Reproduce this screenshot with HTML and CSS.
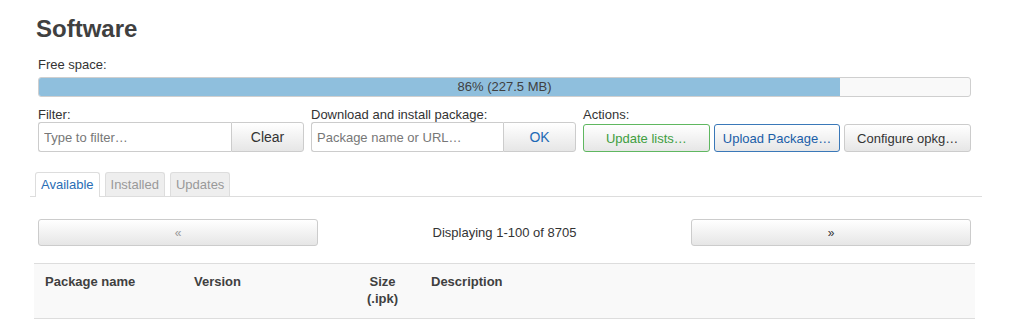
FILE: index.html
```html
<!DOCTYPE html>
<html lang="en">
<head>
  <meta charset="UTF-8">
  <title>Software</title>
  <link rel="stylesheet" href="styles.css">
</head>
<body>

<div class="main">
  <h2 class="title">Software</h2>

  <div class="label">Free space:</div>
  <div class="progress">
    <div class="progress-fill" style="width: 86%"></div>
    <div class="progress-text">86% (227.5 MB)</div>
  </div>

  <div class="controls">
    <div class="control">
      <div class="label">Filter:</div>
      <div class="input-group">
        <input type="text" placeholder="Type to filter…">
        <button class="btn">Clear</button>
      </div>
    </div>
    <div class="control">
      <div class="label">Download and install package:</div>
      <div class="input-group">
        <input type="text" placeholder="Package name or URL…">
        <button class="btn btn-ok">OK</button>
      </div>
    </div>
    <div class="control">
      <div class="label">Actions:</div>
      <div class="actions">
        <button class="btn btn-action btn-green">Update lists…</button>
        <button class="btn btn-action btn-blue">Upload Package…</button>
        <button class="btn btn-action">Configure opkg…</button>
      </div>
    </div>
  </div>

  <ul class="tabs">
    <li class="tab active">Available</li>
    <li class="tab">Installed</li>
    <li class="tab">Updates</li>
  </ul>

  <div class="pager">
    <button class="btn btn-page disabled">&laquo;</button>
    <div class="pager-text">Displaying 1-100 of 8705</div>
    <button class="btn btn-page">&raquo;</button>
  </div>

  <table class="packages">
    <thead>
      <tr>
        <th class="col-name">Package name</th>
        <th class="col-version">Version</th>
        <th class="col-size">Size<br>(.ipk)</th>
        <th>Description</th>
      </tr>
    </thead>
  </table>
</div>

</body>
</html>
```

FILE: styles.css
```css
body {
  margin: 0;
  padding: 0;
  background: #ffffff;
  font-family: "Liberation Sans", Arial, sans-serif;
  font-size: 13px;
  color: #404040;
}

.main {
  width: 933px;
  padding: 15px 0 0 38px;
}

.title {
  margin: 0 0 14px -2px;
  font-size: 24px;
  line-height: 28px;
  font-weight: bold;
  color: #404040;
}

.label {
  line-height: 15px;
  color: #333;
}

/* Free space bar */
.progress {
  position: relative;
  height: 20px;
  margin-top: 5px;
  box-sizing: border-box;
  border: 1px solid #cfcfcf;
  border-radius: 3px;
  background: #f9f9f9;
  overflow: hidden;
}

.progress-fill {
  height: 100%;
  background: #8fbfdd;
}

.progress-text {
  position: absolute;
  top: 0;
  left: 0;
  right: 0;
  text-align: center;
  line-height: 18px;
  color: #404040;
}

/* Filter / download / actions */
.controls {
  display: grid;
  grid-template-columns: 266px 265px 388px;
  gap: 7px;
  margin-top: 10px;
}

.input-group {
  display: flex;
  height: 30px;
}

.input-group input {
  flex: 1;
  min-width: 0;
  box-sizing: border-box;
  height: 30px;
  margin: 0;
  padding: 0 5px;
  border: 1px solid #ccc;
  border-right: none;
  border-radius: 3px 0 0 3px;
  font-family: inherit;
  font-size: 13px;
  color: #404040;
}

.input-group input::placeholder {
  color: #777;
}

.btn {
  box-sizing: border-box;
  margin: 0;
  border: 1px solid #ccc;
  border-radius: 3px;
  background: linear-gradient(#ffffff, #e6e6e6);
  font-family: inherit;
  font-size: 13px;
  color: #333;
  cursor: pointer;
}

.input-group .btn {
  width: 73px;
  height: 30px;
  border-radius: 0 3px 3px 0;
  font-size: 14px;
}

.btn-ok {
  color: #1e6ab5;
}

.actions {
  display: flex;
  gap: 4px;
  margin-top: 2px;
}

.btn-action {
  flex: 1;
  height: 28px;
}

.btn-green {
  border-color: #5fb760;
  color: #3f9e3f;
}

.btn-blue {
  border-color: #3a78b8;
  color: #1a5ea8;
}

/* Tabs */
.tabs {
  display: flex;
  gap: 5px;
  list-style: none;
  margin: 20px -11px 0 -8px;
  padding: 0 0 0 5px;
  border-bottom: 1px solid #ddd;
}

.tab {
  height: 23px;
  margin-bottom: -1px;
  padding: 0 5px;
  line-height: 23px;
  border: 1px solid #ddd;
  border-bottom: none;
  border-radius: 3px 3px 0 0;
  background: #eeeeee;
  color: #999;
}

.tab.active {
  height: 24px;
  background: #ffffff;
  color: #2a6db5;
}

/* Pager */
.pager {
  display: grid;
  grid-template-columns: 280px 1fr 280px;
  align-items: center;
  margin-top: 22px;
}

.btn-page {
  height: 27px;
  font-size: 12px;
}

.btn-page.disabled {
  color: #999;
}

.pager-text {
  text-align: center;
  color: #333;
}

/* Package table */
.packages {
  width: 941px;
  margin: 17px 0 0 -4px;
  border-collapse: collapse;
  background: #f9f9f9;
}

.packages th {
  padding: 9px 11px 11px;
  border-top: 1px solid #ddd;
  border-bottom: 1px solid #ddd;
  text-align: left;
  vertical-align: top;
  line-height: 17px;
  font-weight: bold;
  color: #404040;
}

.packages .col-name {
  width: 127px;
}

.packages .col-version {
  width: 140px;
}

.packages .col-size {
  width: 53px;
  text-align: center;
}
```
